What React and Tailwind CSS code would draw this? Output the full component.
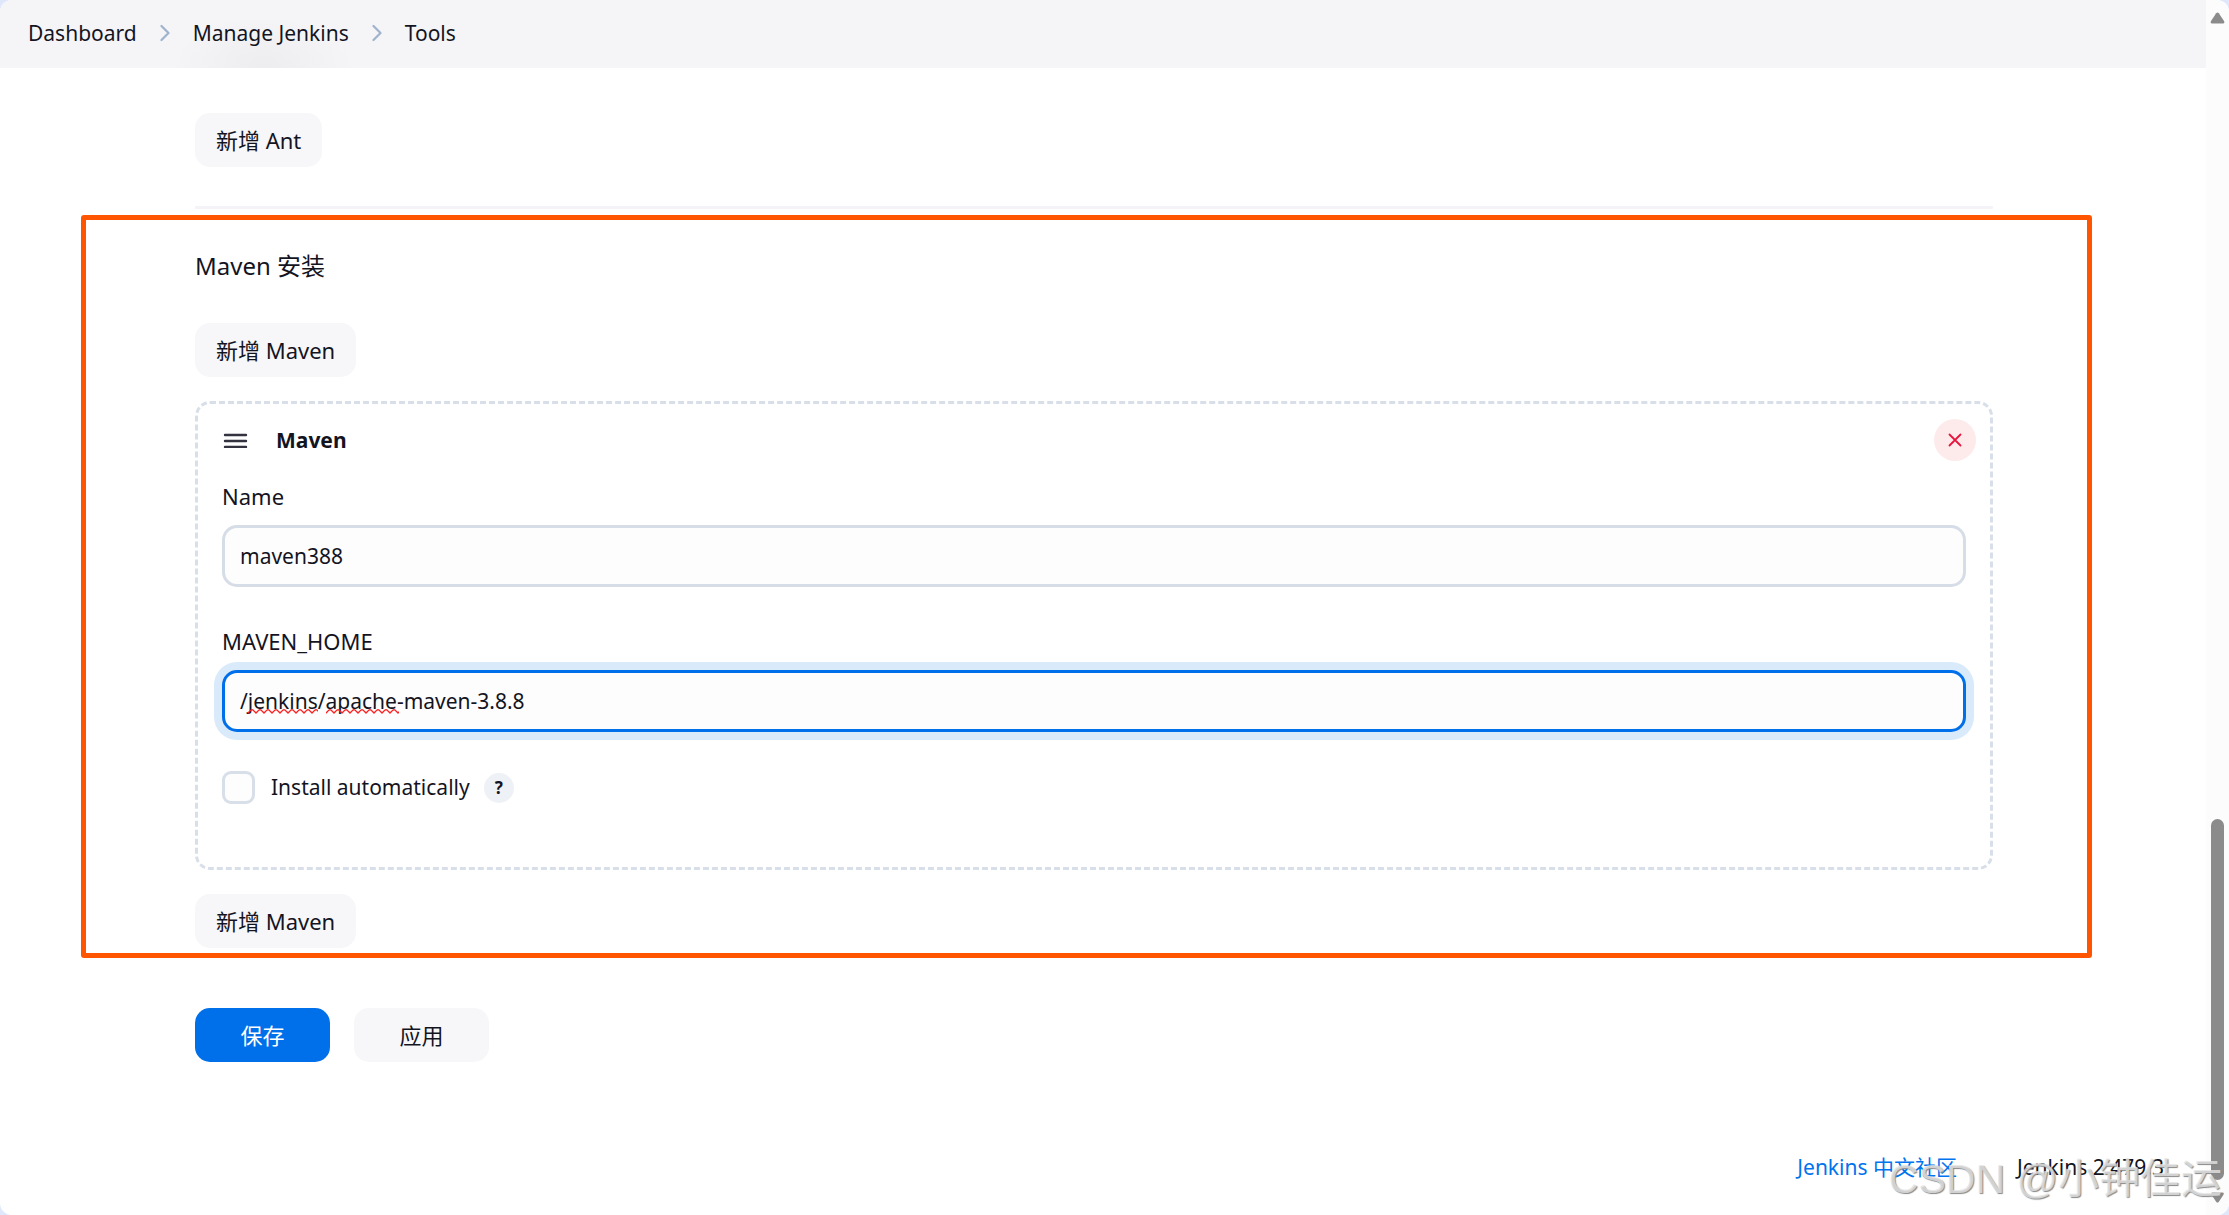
import React, { useState } from "react";

const font = "font-['Noto_Sans','Noto_Sans_CJK_SC',sans-serif]";

function Chevron() {
  return (
    <svg className="h-[18px] w-[10px] shrink-0" viewBox="0 0 10 18" fill="none" aria-hidden="true">
      <path d="M1.5 2 L8.5 9 L1.5 16" stroke="#9fb3cd" strokeWidth="2.2" strokeLinecap="round" strokeLinejoin="round" />
    </svg>
  );
}

function Button({ children, className = "bg-[#f7f7f9] px-[21px] text-[#14141f]", type = "button" }) {
  return (
    <button type={type} className={`h-[54px] rounded-[15px] text-[22px] ${className}`}>
      {children}
    </button>
  );
}

function Squiggle({ id, className }) {
  return (
    <svg className={`pointer-events-none absolute h-[5px] ${className}`} aria-hidden="true">
      <defs>
        <pattern id={id} width="8" height="5" patternUnits="userSpaceOnUse">
          <path d="M-1 5 L0 4 L3 1 L4 0.7 L5 1 L8 4 L9 5" fill="none" stroke="#ff1f1f" strokeWidth="1.3" />
        </pattern>
      </defs>
      <rect width="100%" height="5" fill={`url(#${id})`} />
    </svg>
  );
}

function Header() {
  return (
    <header className="flex h-[68px] items-center bg-[#f5f5f8] bg-[radial-gradient(ellipse_90px_50px_at_263px_66px,#ededf0,transparent)] px-7 pb-[2px]">
      <nav aria-label="Breadcrumb">
        <ol className="flex items-center gap-[23px]">
          <li><a href="#dashboard">Dashboard</a></li>
          <li><Chevron /></li>
          <li><a href="#manage">Manage Jenkins</a></li>
          <li><Chevron /></li>
          <li><a href="#tools">Tools</a></li>
        </ol>
      </nav>
    </header>
  );
}

function MavenInstallation() {
  const [name, setName] = useState("maven388");
  const [home, setHome] = useState("/jenkins/apache-maven-3.8.8");
  const input = "block h-[62px] w-full rounded-[15px] border-[3px] bg-[#fdfdfd] px-[15px] outline-none";
  return (
    <div className="mt-6 h-[469px] rounded-[15px] border-[3px] border-dashed border-[#d8dfe9] px-6">
      <div className="-mr-[10px] flex h-[72px] items-center">
        <svg className="h-[15px] w-[27px]" viewBox="0 0 27 15" fill="none" stroke="#33333f" strokeWidth="2.4" strokeLinecap="round" aria-hidden="true">
          <path d="M3 2H24M3 8H24M3 14H24" />
        </svg>
        <h3 className="ml-[27px] flex-1 font-bold">Maven</h3>
        <button type="button" aria-label="Delete Maven" className="flex size-[42px] items-center justify-center rounded-full bg-[#fdebec]">
          <svg className="size-[14px]" viewBox="0 0 14 14" fill="none" stroke="#e6173f" strokeWidth="1.8" strokeLinecap="round" aria-hidden="true">
            <path d="M1.5 1.5L12.5 12.5M12.5 1.5L1.5 12.5" />
          </svg>
        </button>
      </div>
      <label htmlFor="name" className="mt-[5px] block h-11 text-[22px]">Name</label>
      <input id="name" value={name} onChange={(e) => setName(e.target.value)} className={`${input} border-[#d6dde7]`} />
      <label htmlFor="home" className="mt-[39px] block h-11 text-[22px]">MAVEN_HOME</label>
      <div className="relative">
        <input id="home" value={home} spellCheck={false} onChange={(e) => setHome(e.target.value)} className={`${input} border-[#0070ea] shadow-[0_0_0_8px_#d9eafb]`} />
        <Squiggle id="wave-a" className="left-[26px] top-[39px] w-[70px]" />
        <Squiggle id="wave-b" className="left-[104px] top-[39px] w-[73px]" />
      </div>
      <div className="mt-[39px] flex h-[33px] items-center">
        <input id="auto" type="checkbox" className="size-[33px] appearance-none rounded-[9px] border-[3px] border-[#d8dfe9] bg-[#fdfdfd] checked:bg-[#0070ea]" />
        <label htmlFor="auto" className="pb-px pl-4">Install automatically</label>
        <button type="button" aria-label="Help" className="ml-[14px] size-[30px] rounded-full bg-[#eef1f5] text-[17px] leading-[30px] font-bold">?</button>
      </div>
    </div>
  );
}

function Scrollbar() {
  return (
    <div className="flex w-[23px] shrink-0 flex-col items-center bg-[#fcfcfc] pt-3" aria-hidden="true">
      <svg className="h-3 w-[15px]" viewBox="0 0 15 12"><path d="M6.2 1.2Q7.5 0 8.8 1.2L14 9Q15 11.5 13 11.5H2Q0 11.5 1 9Z" fill="#8b8b8b" /></svg>
      <div className="flex-1" />
      <div className="h-[361px] w-[13px] rounded-full bg-[#8b8b8b]" />
      <svg className="mt-3 mb-3 h-[11px] w-[15px]" viewBox="0 0 15 12"><path d="M6.2 10.8Q7.5 12 8.8 10.8L14 3Q15 .5 13 .5H2Q0 .5 1 3Z" fill="#8b8b8b" /></svg>
    </div>
  );
}

export default function App() {
  return (
    <div className="min-h-screen bg-[#dfe8fa]">
      <div className={`relative flex min-h-screen overflow-hidden rounded-xl bg-white text-[21px] leading-[30px] text-[#14141f] ${font}`}>
        <div className="flex min-w-0 flex-1 flex-col">
          <Header />
          <main>
            <div className="mr-[213px] ml-[195px] border-b-[3px] border-[#f3f3f8] pt-[45px] pb-[39px]">
              <Button>新增 Ant</Button>
            </div>
            <section className="mt-[6px] mr-[114px] ml-[81px] rounded-[3px] border-[5px] border-[#ff5500] pt-[29px] pr-[94px] pb-[5px] pl-[109px]">
              <h2 className="mb-10 text-[24px] leading-[34px]">Maven 安装</h2>
              <Button>新增 Maven</Button>
              <MavenInstallation />
              <div className="mt-6"><Button>新增 Maven</Button></div>
            </section>
            <div className="mt-[50px] ml-[195px] flex gap-6">
              <Button type="submit" className="w-[135px] bg-[#0070ea] text-white">保存</Button>
              <Button className="w-[135px] bg-[#f7f7f9] text-[#14141f]">应用</Button>
            </div>
          </main>
          <footer className="mt-auto flex items-center justify-end gap-[60px] pr-[42px] pb-[33px]">
            <a href="#community" className="text-[#0073ee]">Jenkins 中文社区</a>
            <span>Jenkins 2.479.3</span>
          </footer>
        </div>
        <Scrollbar />
        <div className="pointer-events-none absolute right-[7px] bottom-[10px] font-['Liberation_Sans','Noto_Sans_CJK_SC',sans-serif] text-[41px] leading-[52px] whitespace-nowrap text-[#e6e6e6]/80 [text-shadow:1px_1px_1px_#888888]">
          CSDN @小钟佳运
        </div>
      </div>
    </div>
  );
}
